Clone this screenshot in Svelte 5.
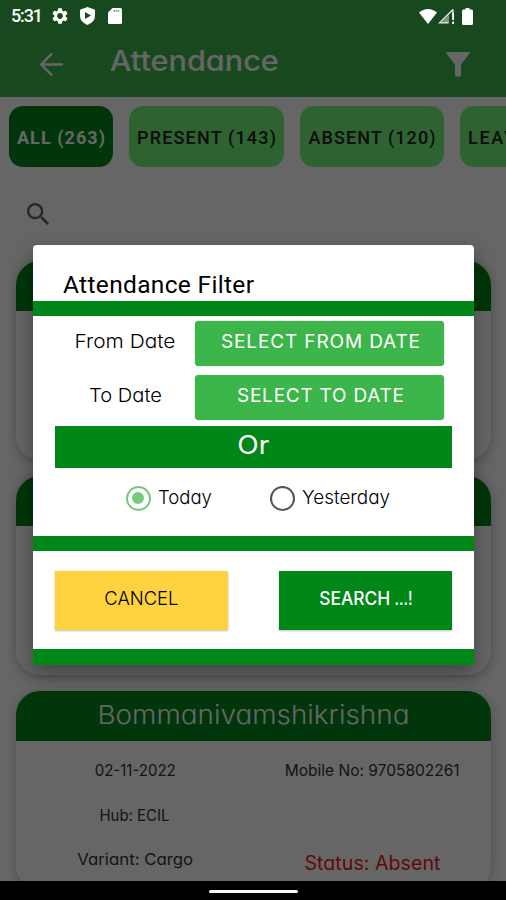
<script>
  const tabs = [
    { label: 'ALL (263)', w: 88, box: 104, active: true },
    { label: 'PRESENT (143)', w: 139, box: 155 },
    { label: 'ABSENT (120)', w: 127, box: 144 },
    { label: 'LEAVE (0)', w: 94, box: 110 }
  ];
  let day = $state('today');

  // Tracks a run of text out or in so that it fills the given width.
  function track(node, width) {
    const count = node.textContent.length;
    const natural = node.getBoundingClientRect().width;
    const gap = (width - natural) / (count - 1);
    node.style.letterSpacing = `${gap}px`;
    node.style.marginRight = `${-gap}px`;
  }

  // Widens or narrows the letters themselves to fill the given width.
  function stretch(node, width) {
    const natural = node.getBoundingClientRect().width;
    node.style.transform = `scaleX(${width / natural})`;
    node.style.margin = `0 ${(width - natural) / 2}px`;
  }
</script>

{#snippet text(value, width)}<span class="run" use:track={width}>{value}</span>{/snippet}
{#snippet wide(value, width)}<span class="run" use:stretch={width}>{value}</span>{/snippet}

<div class="phone">
  <div class="screen">
    <header>
      <svg class="back" viewBox="0 0 24 24"><path d="M23 12H2M12.500 1.500 2 12l10.500 10.500" fill="none" stroke="#fff" stroke-width="2.300" /></svg>
      <h1>{@render wide('Attendance', 169)}</h1>
      <svg class="funnel" viewBox="0 0 24 25"><path d="M.8 0h22.400q1.200 0 .5 1.200L15 12.500V23q0 1.500-1.500 1.500h-3Q9 24.500 9 23V12.500L.3 1.200Q-.4 0 .8 0z" fill="#fff" /></svg>
    </header>
    <nav>
      {#each tabs as tab}
        <div class="tab" class:active={tab.active} style:width="{tab.box}px">{@render text(tab.label, tab.w)}</div>
      {/each}
    </nav>
    <div class="search">
      <svg viewBox="3 3 17.500 17.500"><path fill="#666" d="M15.500 14h-.79l-.28-.27C15.410 12.590 16 11.110 16 9.500 16 5.910 13.090 3 9.500 3S3 5.910 3 9.500 5.910 16 9.500 16c1.610 0 3.090-.59 4.230-1.570l.27.28v.79l5 4.990L20.490 19l-4.990-5zm-6 0C7.010 14 5 11.990 5 9.500S7.010 5 9.500 5 14 7.010 14 9.500 11.990 14 9.500 14z" /></svg>
    </div>
    <div class="cards">
      <article><div class="name"></div></article>
      <article><div class="name"></div></article>
      <article>
        <div class="name">{@render wide('Bommanivamshikrishna', 312)}</div>
        <div class="info">
          <div class="col">
            <p>{@render wide('02-11-2022', 81)}</p>
            <p>{@render wide('Hub: ECIL', 70)}</p>
            <p>{@render wide('Variant: Cargo', 116)}</p>
          </div>
          <div class="col right">
            <p>{@render wide('Mobile No: 9705802261', 175)}</p>
            <p class="status">{@render wide('Status: Absent', 136)}</p>
          </div>
        </div>
      </article>
    </div>
  </div>

  <div class="scrim">
    <div class="dialog">
      <h2>{@render text('Attendance Filter', 191)}</h2>
      <div class="rule"></div>
      <div class="dates">
        <span class="label">{@render wide('From Date', 101)}</span>
        <button class="pick">{@render text('SELECT FROM DATE', 199)}</button>
        <span class="label">{@render wide('To Date', 73)}</span>
        <button class="pick">{@render text('SELECT TO DATE', 167)}</button>
      </div>
      <div class="or">{@render wide('Or', 32)}</div>
      <div class="radios">
        <label class:on={day === 'today'}><input type="radio" bind:group={day} value="today" /><i></i>{@render wide('Today', 54)}</label>
        <label class:on={day === 'yesterday'}><input type="radio" bind:group={day} value="yesterday" /><i></i>{@render wide('Yesterday', 88)}</label>
      </div>
      <div class="rule"></div>
      <div class="actions">
        <button class="cancel">{@render wide('CANCEL', 74)}</button>
        <button class="go">{@render wide('SEARCH', 71)}<span class="dots">{@render wide('...!', 18)}</span></button>
      </div>
      <div class="rule last"></div>
    </div>
  </div>

  <div class="statusbar">
    <span class="clock">{@render text('5:31', 32)}</span>
    <svg width="16" height="16" viewBox="2 2 20 20"><path fill="#fff" d="M19.140 12.940c.04-.3.060-.61.060-.94s-.02-.64-.07-.94l2.030-1.580c.18-.14.230-.41.120-.61l-1.920-3.320c-.12-.22-.37-.29-.59-.22l-2.390.96c-.5-.38-1.030-.7-1.620-.94L14.400 2.810c-.04-.24-.24-.41-.48-.41h-3.840c-.24 0-.43.170-.47.410l-.36 2.540c-.59.240-1.130.57-1.620.94l-2.390-.96c-.22-.08-.47 0-.59.220L2.740 8.870c-.12.210-.08.470.120.610l2.030 1.580c-.05.300-.09.630-.09.940s.020.640.070.940l-2.030 1.580c-.18.140-.23.410-.12.610l1.920 3.320c.12.220.37.290.59.220l2.390-.96c.5.380 1.030.700 1.620.940l.36 2.540c.05.240.24.410.48.410h3.840c.24 0 .44-.17.470-.41l.36-2.540c.59-.24 1.130-.56 1.620-.94l2.390.96c.22.080.47 0 .59-.22l1.920-3.320c.12-.22.070-.47-.12-.61l-2.010-1.580zM12 15.600c-1.980 0-3.600-1.620-3.600-3.600s1.620-3.600 3.600-3.600 3.600 1.620 3.600 3.600-1.620 3.600-3.600 3.600z" /></svg>
    <svg class="shield" width="15" height="18" viewBox="0 0 15 18"><path fill="#fff" d="M7.500 0 15 2.800v6q0 6.200-7.500 9.200Q0 15 0 8.800v-6z" /><path fill="#18491e" d="M5 5v7l6-3.500z" /></svg>
    <svg class="sd" width="14" height="16" viewBox="0 0 14 16"><path fill="#fff" d="M4.500 0H12.500Q14 0 14 1.500v13q0 1.500-1.500 1.500h-11Q0 16 0 14.500v-10z" /><path stroke="#18491e" stroke-opacity=".7" stroke-width="1.200" stroke-dasharray="1.600 .5" d="M5.500 2.800h6" /></svg>
    <span class="grow"></span>
    <svg width="18" height="15" viewBox="0 0 18 15"><path fill="#fff" d="M0 3.500Q4 0 9 0t9 3.500L9 15z" /></svg>
    <svg class="cell" width="16" height="16" viewBox="0 0 16 16"><path fill="none" stroke="#e6eee6" stroke-width="1.400" d="M10.500 14.800H1.600L15 1.500M15 1.500v7.500" /><path fill="#c5d0c5" d="M5.500 12 11 7v8H4z" opacity=".6" /><path fill="#fff" d="M14.200 5H16v7h-1.800zM14.200 13.500H16V16h-1.800z" /></svg>
    <svg width="11" height="17" viewBox="0 0 11 17"><path fill="#fff" d="M3.500 0h4v1.500h2q1.500 0 1.500 1.500v12.500q0 1.500-1.500 1.500h-8Q0 17 0 15.500V3q0-1.500 1.500-1.500h2z" /></svg>
  </div>
  <div class="navbar"><i></i></div>
</div>

<style>
  .phone { position: relative; width: 506px; height: 900px; overflow: hidden; background: #fff; font-family: Inter, "Open Sans", sans-serif; font-feature-settings: "cv11"; }
  .run { display: inline-block; white-space: pre; }
  h1, h2, p { margin: 0; font-weight: 400; }
  button { border: 0; padding: 0; font-family: inherit; font-feature-settings: inherit; }
  svg { display: block; flex: none; }
  .screen { display: flex; flex-direction: column; height: 900px; }
  header { display: flex; align-items: center; height: 65px; padding: 32px 36px 0 39px; background: #3cb64b; flex: none; box-sizing: content-box; }
  .back { width: 25px; height: 25px; }
  h1 { margin: -7px auto 0 46px; font-size: 28px; font-weight: 500; line-height: 34px; color: #fff; }
  .funnel { width: 24px; height: 25px; }
  nav { display: flex; gap: 16px; padding: 9px 0 0 9px; flex: none; overflow: hidden; }
  .tab { display: flex; justify-content: center; align-items: center; flex: none; box-sizing: border-box; height: 61px; padding-top: 2px; border-radius: 14px; background: #75f57a; font: 500 18px/24px Roboto, sans-serif; color: #222; }
  .tab.active { background: #008718; color: #fff; font-weight: 700; }
  .search { padding: 36px 0 0 27px; height: 58px; flex: none; }
  .search svg { width: 22px; height: 22px; }
  .cards { display: flex; flex-direction: column; gap: 16px; padding: 0 15px 0 16px; }
  article { height: 199px; flex: none; border-radius: 24px; overflow: hidden; background: #fff; box-shadow: 0 2px 12px rgba(0, 0, 0, .25); }
  .name { display: flex; align-items: center; justify-content: center; height: 49.500px; box-sizing: border-box; background: #008718; font-size: 26px; font-weight: 300; color: #fff; padding-bottom: 3px; }
  .info { display: flex; font-size: 16px; font-weight: 300; color: #333; }
  .col { width: 238px; display: flex; flex-direction: column; align-items: center; padding-top: 17.500px; gap: 20.500px; }
  .col p { line-height: 24px; }
  .right { gap: 69px; }
  .status { font-size: 19.500px; color: #f01818; }
  .scrim { position: absolute; inset: 0; box-sizing: border-box; padding: 245px 32px 0 33px; background: rgba(0, 0, 0, .6); }
  .dialog { border-radius: 4px 4px 0 0; overflow: hidden; background: #fff; box-shadow: 0 8px 20px rgba(0, 0, 0, .35); color: #000; }
  h2 { height: 56px; box-sizing: border-box; padding: 26px 0 0 30px; font: 400 24.500px/28px Roboto, sans-serif; }
  .rule { height: 15px; background: #008718; }
  .last { height: 16px; }
  .dates { display: grid; grid-template-columns: 162px 249px; grid-template-rows: 45px 45px; row-gap: 9px; padding: 4.500px 0 6.500px; }
  .label { display: flex; justify-content: center; align-items: center; padding: 0 0 4px 22px; font-size: 19px; font-weight: 300; }
  .pick { display: flex; justify-content: center; align-items: center; border-radius: 4px; background: #3cb64b; padding: 0 0 4px 2px; color: #fff; font-size: 19px; font-weight: 400; box-shadow: 0 0 1px #1aa02c; }
  .or { display: flex; justify-content: center; align-items: center; height: 42px; margin: 0 22px; padding-bottom: 4px; box-sizing: border-box; background: #008718; color: #fff; font-size: 25px; font-weight: 400; }
  .radios { display: flex; height: 68px; box-sizing: border-box; padding: 17.500px 0 0 92.500px; gap: 58.500px; font-size: 18.500px; font-weight: 300; }
  label { display: flex; height: 26px; }
  label .run { line-height: 22px; }
  label input { appearance: none; width: 0; height: 0; margin: 0; }
  label i { position: relative; box-sizing: border-box; width: 25px; height: 25px; margin-right: 7px; border: 2px solid #555; border-radius: 50%; flex: none; }
  .on i { border-color: #76c980; }
  .on i::after { content: ''; position: absolute; inset: 4.500px; border-radius: 50%; background: #76c980; }
  .actions { display: flex; justify-content: space-between; padding: 20px 22px 19px; }
  .actions button { display: flex; align-items: center; justify-content: center; width: 173px; height: 59px; padding-bottom: 4px; font-size: 19px; box-shadow: 0 1px 2px rgba(0, 0, 0, .25); }
  .actions .cancel { background: #ffd23f; color: #000; font-weight: 300; }
  .actions .go { background: #008718; color: #fff; font-weight: 500; }
  .dots { margin-left: 4px; }
  .statusbar { position: absolute; top: 0; left: 0; right: 0; height: 32px; display: flex; align-items: center; padding: 0 33px 0 11px; color: #fff; }
  .clock { font: 500 18px/32px Roboto, sans-serif; margin-right: 9px; }
  .shield { margin-left: 12px; }
  .sd { margin-left: 13px; }
  .grow { flex: 1; }
  .cell { margin: 0 8px 0 1px; }
  .navbar { position: absolute; left: 0; right: 0; bottom: 0; height: 19px; display: flex; justify-content: center; background: #000; }
  .navbar i { width: 89px; height: 3px; margin-top: 9px; border-radius: 2px; background: #f5f5f5; }
</style>
